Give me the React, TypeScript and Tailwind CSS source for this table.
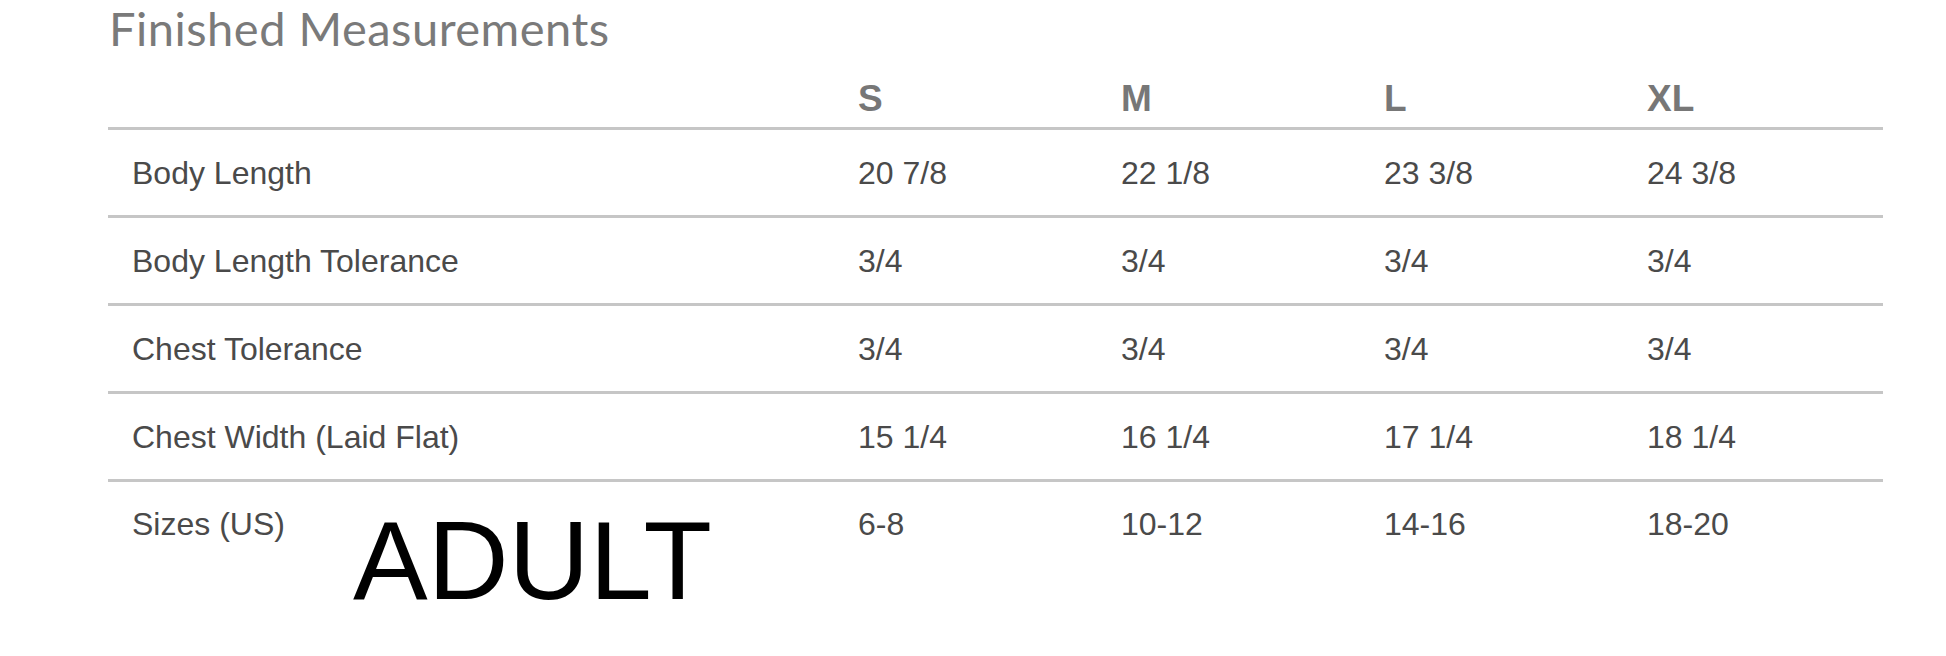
const sizes = ["S", "M", "L", "XL"];

const rows: { label: string; values: string[] }[] = [
  { label: "Body Length", values: ["20 7/8", "22 1/8", "23 3/8", "24 3/8"] },
  { label: "Body Length Tolerance", values: ["3/4", "3/4", "3/4", "3/4"] },
  { label: "Chest Tolerance", values: ["3/4", "3/4", "3/4", "3/4"] },
  { label: "Chest Width (Laid Flat)", values: ["15 1/4", "16 1/4", "17 1/4", "18 1/4"] },
];

const colClass = ["w-[263px]", "w-[263px]", "w-[263px]", "flex-1"];

const App = () => {
  return (
    <div className="w-[1946px] h-[656px] bg-white overflow-hidden">
      <div className="ml-[108px] w-[1775px]">
        <h1 className="pl-[1px] text-[47px] leading-[56px] tracking-[0.5px] text-[#7a7a7a] font-['Lato',sans-serif]">
          Finished Measurements
        </h1>

        <div className="font-['Liberation_Sans',Arial,sans-serif]">
          {/* header */}
          <div className="flex items-end h-[74px] pb-[8px] border-b-[3px] border-[#c6c6c6]">
            <div className="w-[750px]" />
            {sizes.map((s, i) => (
              <div key={s} className={`${colClass[i]} text-[37px] leading-[40px] font-bold text-[#777777]`}>
                {s}
              </div>
            ))}
          </div>

          {rows.map((row) => (
            <div
              key={row.label}
              className="flex items-center h-[88px] border-b-[3px] border-[#c6c6c6] text-[32px] text-[#4a4a4a]"
            >
              <div className="w-[750px] pl-[24px]">{row.label}</div>
              {row.values.map((v, i) => (
                <div key={i} className={colClass[i]}>
                  {v}
                </div>
              ))}
            </div>
          ))}

          {/* last row */}
          <div className="flex items-start text-[32px] leading-[85px] text-[#4a4a4a]">
            <div className="w-[750px] pl-[24px] flex items-start">
              <span className="w-[221px] shrink-0">Sizes (US)</span>
              <span className="mt-[24px] text-[112px] leading-[110px] text-black">ADULT</span>
            </div>
            {["6-8", "10-12", "14-16", "18-20"].map((v, i) => (
              <div key={v} className={colClass[i]}>
                {v}
              </div>
            ))}
          </div>
        </div>
      </div>
    </div>
  );
};

export default App;
